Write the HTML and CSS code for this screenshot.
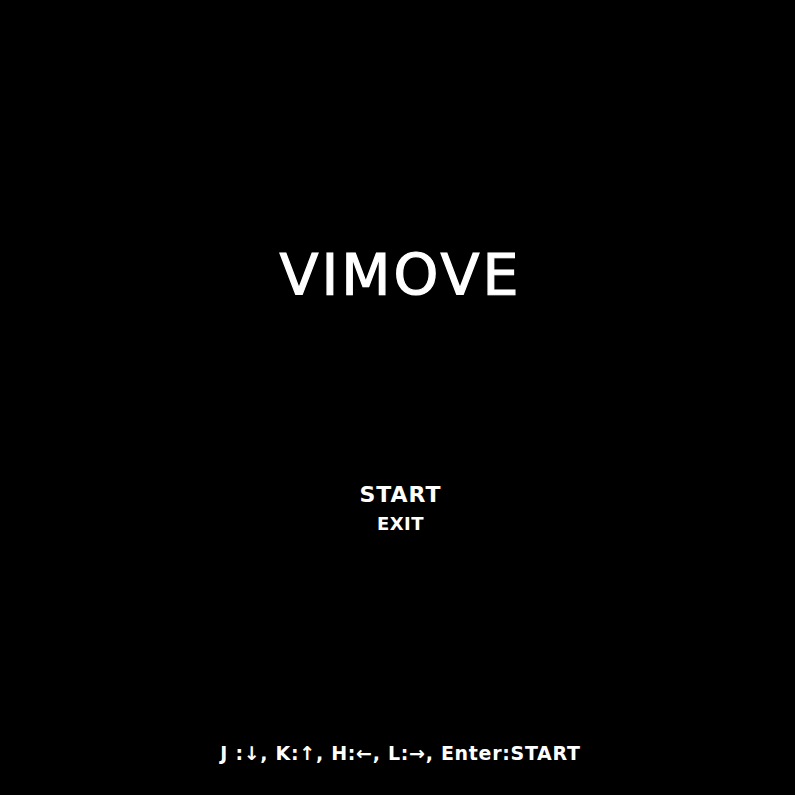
FILE: index.html
```html
<!DOCTYPE html>
<html lang="ja">
<head>
<meta charset="utf-8">
<link rel="stylesheet" href="styles.css">
</head>
<body>
<div class="screen">
  <h1 class="title">VIMOVE</h1>
  <ul class="menu">
    <li class="item selected">START</li>
    <li class="item">EXIT</li>
  </ul>
  <p class="help">J :↓, K:↑, H:←, L:→, Enter:START</p>
</div>
</body>
</html>
```
FILE: styles.css
```css
html, body {
  margin: 0;
  padding: 0;
  background: #000;
}
.screen {
  box-sizing: border-box;
  width: 795px;
  height: 795px;
  padding-left: 6px;
  background: #000;
  color: #fff;
  font-family: "DejaVu Sans", sans-serif;
  display: flex;
  flex-direction: column;
  align-items: center;
}
.title {
  margin: 240px 0 0 0;
  font-size: 57px;
  font-weight: 400;
  line-height: 70px;
  letter-spacing: 3px;
  -webkit-text-stroke: 1.2px #fff;
}
.menu {
  list-style: none;
  margin: 172px 0 0 0;
  padding: 0;
  display: flex;
  flex-direction: column;
  align-items: center;
  gap: 5px;
}
.item {
  font-weight: 700;
  font-size: 18px;
  line-height: 22px;
  letter-spacing: 0.5px;
}
.item.selected {
  font-size: 22px;
  line-height: 26px;
  letter-spacing: 1px;
}
.help {
  margin: auto 0 31px 0;
  font-size: 19px;
  font-weight: 700;
  line-height: 22px;
  letter-spacing: 0.7px;
}
```
